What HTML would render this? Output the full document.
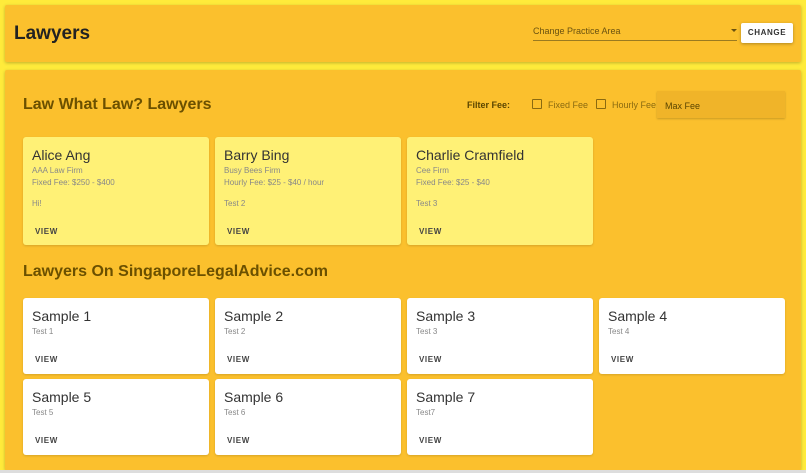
<!DOCTYPE html>
<html><head><style>
*{box-sizing:border-box;margin:0;padding:0}
body{width:806px;height:473px;background:#ffeb3b;font-family:"Liberation Sans",sans-serif;position:relative;overflow:hidden}
.panel{position:absolute;background:#fbc02d;border-radius:2px;box-shadow:0 1px 3px rgba(0,0,0,.25)}
.abs{position:absolute}
.card{position:absolute;width:186px;border-radius:3px;box-shadow:0 1px 2px rgba(0,0,0,.15)}
.y{background:#fff176;height:108px}
.w{background:#fff;height:76px}
.card .n{position:absolute;left:9px;top:10px;font-size:14px;color:#333}
.card .s{position:absolute;left:9px;font-size:8px;color:#888}
.card .v{position:absolute;left:12px;font-size:8px;font-weight:bold;letter-spacing:.6px;color:#444}
.cb{position:absolute;width:10px;height:10px;border:1.5px solid #8a6a10;border-radius:1px}
.lbl{position:absolute;font-size:9px;color:#8a6a10}
</style></head><body>
<div class="panel" style="left:5px;top:5px;width:796px;height:57px"></div>
<div class="abs" style="left:14px;top:23px;font-size:19px;font-weight:bold;color:#222">Lawyers</div>
<div class="abs" style="left:533px;top:26px;font-size:9px;color:#6a5210">Change Practice Area</div>
<div class="abs" style="left:731px;top:29px;width:0;height:0;border-left:3px solid transparent;border-right:3px solid transparent;border-top:3px solid #6a5210"></div>
<div class="abs" style="left:533px;top:40px;width:204px;height:1px;background:#9a7a20"></div>
<div class="abs" style="left:741px;top:23px;width:52px;height:20px;background:#fff;border-radius:2px;box-shadow:0 1px 3px rgba(0,0,0,.3);font-size:8px;font-weight:bold;letter-spacing:.6px;color:#333;text-align:center;line-height:20px">CHANGE</div>

<div class="panel" style="left:5px;top:70px;width:796px;height:400px"></div>
<div class="abs" style="left:0;top:470px;width:806px;height:3px;background:#ddd"></div>
<div class="abs" style="left:23px;top:96px;font-size:16px;font-weight:bold;color:#6b5000">Law What Law? Lawyers</div>
<div class="lbl" style="left:467px;top:100px;font-weight:bold;color:#5a4500">Filter Fee:</div>
<div class="cb" style="left:532px;top:99px"></div>
<div class="lbl" style="left:548px;top:100px">Fixed Fee</div>
<div class="cb" style="left:596px;top:99px"></div>
<div class="lbl" style="left:612px;top:100px">Hourly Fee</div>
<div class="abs" style="left:657px;top:91px;width:128px;height:27px;background:#f0b429;box-shadow:0 1px 2px rgba(0,0,0,.2);font-size:9px;color:#5a4500;padding:10px 0 0 8px">Max Fee</div>

<div class="card y" style="left:23px;top:137px"><div class="n">Alice Ang</div><div class="s" style="top:29px">AAA Law Firm</div><div class="s" style="top:41px">Fixed Fee: $250 - $400</div><div class="s" style="top:62px">Hi!</div><div class="v" style="top:90px">VIEW</div></div>
<div class="card y" style="left:215px;top:137px"><div class="n">Barry Bing</div><div class="s" style="top:29px">Busy Bees Firm</div><div class="s" style="top:41px">Hourly Fee: $25 - $40 / hour</div><div class="s" style="top:62px">Test 2</div><div class="v" style="top:90px">VIEW</div></div>
<div class="card y" style="left:407px;top:137px"><div class="n">Charlie Cramfield</div><div class="s" style="top:29px">Cee Firm</div><div class="s" style="top:41px">Fixed Fee: $25 - $40</div><div class="s" style="top:62px">Test 3</div><div class="v" style="top:90px">VIEW</div></div>

<div class="abs" style="left:23px;top:263px;font-size:16px;font-weight:bold;color:#6b5000">Lawyers On SingaporeLegalAdvice.com</div>

<div class="card w" style="left:23px;top:298px"><div class="n">Sample 1</div><div class="s" style="top:29px">Test 1</div><div class="v" style="top:57px">VIEW</div></div>
<div class="card w" style="left:215px;top:298px"><div class="n">Sample 2</div><div class="s" style="top:29px">Test 2</div><div class="v" style="top:57px">VIEW</div></div>
<div class="card w" style="left:407px;top:298px"><div class="n">Sample 3</div><div class="s" style="top:29px">Test 3</div><div class="v" style="top:57px">VIEW</div></div>
<div class="card w" style="left:599px;top:298px"><div class="n">Sample 4</div><div class="s" style="top:29px">Test 4</div><div class="v" style="top:57px">VIEW</div></div>
<div class="card w" style="left:23px;top:379px"><div class="n">Sample 5</div><div class="s" style="top:29px">Test 5</div><div class="v" style="top:57px">VIEW</div></div>
<div class="card w" style="left:215px;top:379px"><div class="n">Sample 6</div><div class="s" style="top:29px">Test 6</div><div class="v" style="top:57px">VIEW</div></div>
<div class="card w" style="left:407px;top:379px"><div class="n">Sample 7</div><div class="s" style="top:29px">Test7</div><div class="v" style="top:57px">VIEW</div></div>
</body></html>
